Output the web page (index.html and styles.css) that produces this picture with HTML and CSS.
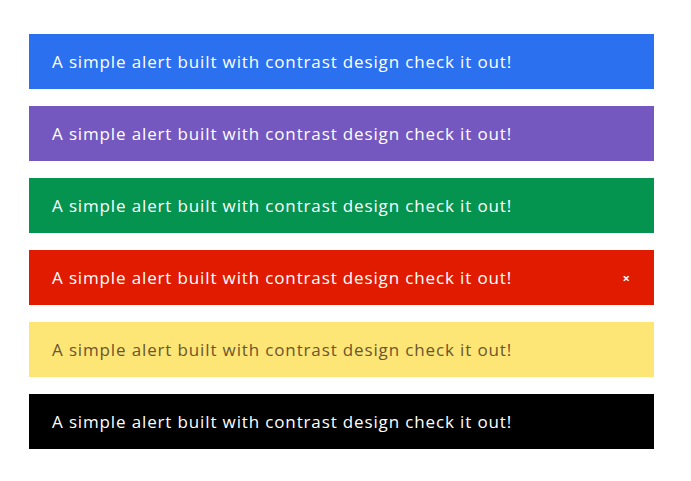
FILE: index.html
```html
<!DOCTYPE html>
<html>
<head>
<meta charset="utf-8">
<link rel="stylesheet" href="styles.css">
</head>
<body>
<div class="alerts">
  <div class="alert alert-blue"><span class="alert-text">A simple alert built with contrast design check it out!</span></div>
  <div class="alert alert-purple"><span class="alert-text">A simple alert built with contrast design check it out!</span></div>
  <div class="alert alert-green"><span class="alert-text">A simple alert built with contrast design check it out!</span></div>
  <div class="alert alert-red"><span class="alert-text">A simple alert built with contrast design check it out!</span><span class="alert-close">×</span></div>
  <div class="alert alert-yellow"><span class="alert-text">A simple alert built with contrast design check it out!</span></div>
  <div class="alert alert-black"><span class="alert-text">A simple alert built with contrast design check it out!</span></div>
</div>
</body>
</html>
```
FILE: styles.css
```css
html, body {
  margin: 0;
  padding: 0;
  background: #ffffff;
}
body {
  font-family: "Open Sans", "Liberation Sans", sans-serif;
}
.alerts {
  display: flex;
  flex-direction: column;
  gap: 17px;
  width: 625px;
  margin: 34px 0 0 29px;
}
.alert {
  height: 55px;
  display: flex;
  align-items: center;
  justify-content: space-between;
  padding: 0 24px 0 23px;
  box-sizing: border-box;
  color: #ffffff;
  font-size: 17px;
}
.alert-text {
  letter-spacing: 0.86px;
}
.alert-close {
  font-size: 13px;
  font-weight: 700;
}
.alert-blue { background: #2b70ef; }
.alert-purple { background: #7457bf; }
.alert-green { background: #04944f; }
.alert-red { background: #e01b00; }
.alert-yellow { background: #fde675; color: #6b5530; }
.alert-black { background: #000000; }
```
